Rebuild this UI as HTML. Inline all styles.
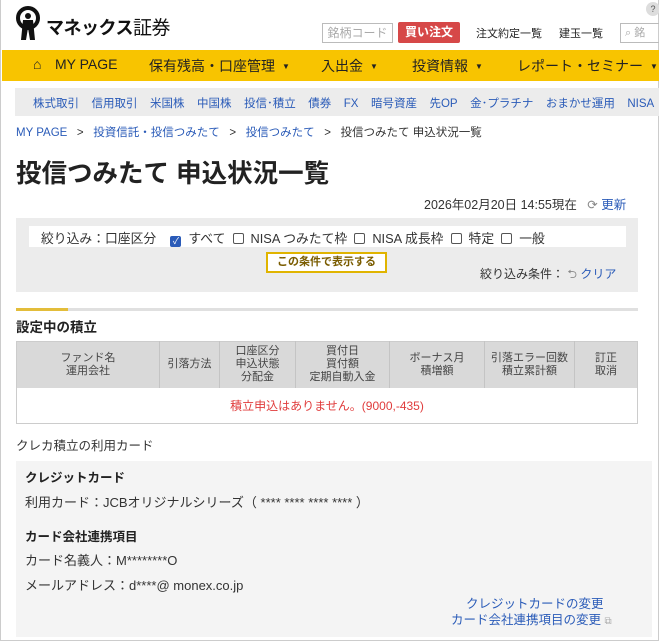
<!DOCTYPE html>
<html><head><meta charset="utf-8"><style>
*{margin:0;padding:0;box-sizing:border-box}
body{width:659px;height:641px;overflow:hidden;background:#fff;font-family:"Liberation Sans","Noto Sans CJK JP",sans-serif;color:#333;position:relative;font-size:12px}
.a{position:absolute;white-space:nowrap}
.frame{position:absolute;left:0;top:0;width:659px;height:641px;border:1px solid #ccc;border-top:none}
.blue{color:#2a5bb8}
table{border-collapse:collapse}
th{background:#d9d9d9;font-weight:normal;font-size:11px;color:#444;line-height:13px;border-right:1px solid #c4c4c4;text-align:center}
.cb{display:inline-block;width:11px;height:11px;border:1px solid #555;border-radius:2px;vertical-align:-1px;margin-right:7px;background:#fff}
.nav{font-size:14px;color:#222;top:56px}
.nav small{font-size:8px;margin-left:7px;vertical-align:2px}
.sub span{margin-right:12.5px}
</style></head><body>
<div class="frame"></div>
<svg class="a" style="left:13px;top:6px" width="32" height="36" viewBox="0 0 32 36"><circle cx="15" cy="12" r="10" fill="none" stroke="#111" stroke-width="4"/><circle cx="15" cy="10" r="3" fill="#111"/><path d="M10 14 L8 34 L13 34 L15 22 L17 34 L22 34 L20 14 Z" fill="#111"/></svg>
<div class="a" style="left:46px;top:13px;font-size:18px;font-weight:bold;color:#111;letter-spacing:-0.5px">マネックス<span style="font-weight:normal;font-size:19px">証券</span></div>
<div class="a" style="left:646px;top:2px;width:14px;height:14px;border-radius:7px;background:#ddd;font-size:9px;text-align:center;line-height:14px;color:#555">?</div>
<div class="a" style="left:322px;top:23px;width:71px;height:20px;border:1px solid #bbb;color:#aaa;font-size:12px;line-height:18px;text-align:center">銘柄コード</div>
<div class="a" style="left:398px;top:22px;width:62px;height:21px;background:#d64848;color:#fff;font-weight:bold;font-size:12px;line-height:21px;text-align:center;border-radius:2px">買い注文</div>
<div class="a" style="left:476px;top:25px;font-size:11px;color:#222">注文約定一覧</div>
<div class="a" style="left:559px;top:25px;font-size:11px;color:#222">建玉一覧</div>
<div class="a" style="left:620px;top:23px;width:60px;height:20px;border:1px solid #bbb;color:#aaa;font-size:11px;line-height:18px;padding-left:4px">⌕ 銘</div>
<div class="a" style="left:2px;top:50px;width:657px;height:31px;background:#f8c400"></div>
<div class="a nav" style="left:33px">⌂</div>
<div class="a nav" style="left:55px">MY PAGE</div>
<div class="a nav" style="left:149px">保有残高・口座管理<small>▼</small></div>
<div class="a nav" style="left:321px">入出金<small>▼</small></div>
<div class="a nav" style="left:412px">投資情報<small>▼</small></div>
<div class="a nav" style="left:517px">レポート・セミナー<small>▼</small></div>
<div class="a" style="left:15px;top:88px;width:644px;height:28px;background:#ececec"></div>
<div class="a blue sub" style="left:33px;top:95px;font-size:11.5px"><span>株式取引</span><span>信用取引</span><span>米国株</span><span>中国株</span><span>投信･積立</span><span>債券</span><span>FX</span><span>暗号資産</span><span>先OP</span><span>金･プラチナ</span><span>おまかせ運用</span><span>NISA</span></div>
<div class="a" style="left:16px;top:124px;font-size:11.5px;color:#333"><span class="blue">MY PAGE</span>&nbsp;&nbsp; &gt; &nbsp;&nbsp;<span class="blue">投資信託・投信つみたて</span>&nbsp;&nbsp; &gt; &nbsp;&nbsp;<span class="blue">投信つみたて</span>&nbsp;&nbsp; &gt; &nbsp;&nbsp;投信つみたて 申込状況一覧</div>
<div class="a" style="left:16px;top:153px;font-size:25.5px;font-weight:bold;color:#222">投信つみたて 申込状況一覧</div>
<div class="a" style="left:424px;top:194px;font-size:12.5px;color:#333">2026年02月20日 14:55現在&nbsp;&nbsp; <span style="color:#888">⟳</span> <span class="blue">更新</span></div>
<div class="a" style="left:16px;top:218px;width:622px;height:74px;background:#ececec"></div>
<div class="a" style="left:29px;top:226px;width:597px;height:21px;background:#fff"></div>
<div class="a" style="left:41px;top:228px;font-size:12.8px;color:#333">絞り込み：口座区分&nbsp;&nbsp;&nbsp; <span class="cb" style="background:#2a5bb8;border-color:#2a5bb8;color:#fff;font-size:9px;line-height:9px;text-align:center">✓</span>すべて&nbsp; <span class="cb"></span>NISA つみたて枠&nbsp; <span class="cb"></span>NISA 成長枠&nbsp; <span class="cb"></span>特定&nbsp; <span class="cb"></span>一般</div>
<div class="a" style="left:266px;top:252px;width:121px;height:21px;border:2px solid #e0b400;background:#fff;color:#7a5c00;font-weight:bold;font-size:11px;line-height:17px;text-align:center">この条件で表示する</div>
<div class="a" style="left:480px;top:265px;font-size:12px;color:#333">絞り込み条件：&nbsp;<span style="color:#888">⮌</span> <span class="blue">クリア</span></div>
<div class="a" style="left:16px;top:308px;width:622px;height:3px;background:#e0e0e0"></div>
<div class="a" style="left:16px;top:308px;width:52px;height:3px;background:#e3bd3a"></div>
<div class="a" style="left:16px;top:316px;font-size:13.5px;font-weight:bold;color:#222">設定中の積立</div>
<table class="a" style="left:16px;top:341px;width:622px;border:1px solid #ccc">
<tr style="height:46px"><th style="width:143px">ファンド名<br>運用会社</th><th style="width:60px">引落方法</th><th style="width:76px">口座区分<br>申込状態<br>分配金</th><th style="width:94px">買付日<br>買付額<br>定期自動入金</th><th style="width:95px">ボーナス月<br>積増額</th><th style="width:90px">引落エラー回数<br>積立累計額</th><th style="border-right:none">訂正<br>取消</th></tr>
<tr style="height:36px"><td colspan="7" style="text-align:center;color:#e03c3c;font-size:12px;background:#fff">積立申込はありません。(9000,-435)</td></tr>
</table>
<div class="a" style="left:16px;top:435px;font-size:12.5px;color:#333">クレカ積立の利用カード</div>
<div class="a" style="left:16px;top:461px;width:636px;height:176px;background:#f4f4f4"></div>
<div class="a" style="left:25px;top:467px;font-size:12.5px;font-weight:bold;color:#222">クレジットカード</div>
<div class="a" style="left:25px;top:492px;font-size:13px;color:#333">利用カード：JCBオリジナルシリーズ（ **** **** **** **** ）</div>
<div class="a" style="left:25px;top:526px;font-size:12.5px;font-weight:bold;color:#222">カード会社連携項目</div>
<div class="a" style="left:25px;top:550px;font-size:13px;color:#333">カード名義人：M********O</div>
<div class="a" style="left:25px;top:575px;font-size:13px;color:#333">メールアドレス：d****@ monex.co.jp</div>
<div class="a blue" style="left:466px;top:593px;font-size:12.5px">クレジットカードの変更</div>
<div class="a blue" style="left:451px;top:609px;font-size:12.5px">カード会社連携項目の変更 <span style="color:#aaa;font-size:10px">⧉</span></div>
</body></html>
